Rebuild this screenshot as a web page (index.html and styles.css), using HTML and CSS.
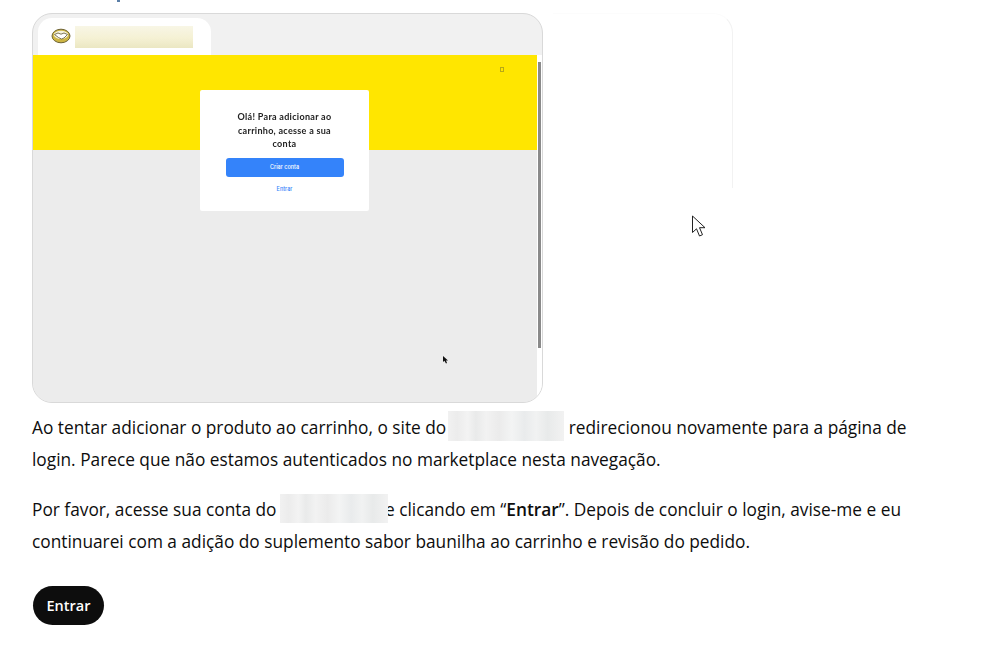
FILE: index.html
```html
<!DOCTYPE html>
<html lang="pt-BR">
<head>
<meta charset="utf-8">
<title>Entrar</title>
<link rel="stylesheet" href="styles.css">
</head>
<body>
<main class="page">
  <div class="top-strip"><span class="descender"></span></div>
  <div class="carousel">
    <figure class="shot">
      <div class="tabbar">
        <div class="tab">
          <svg class="logo" viewBox="0 0 20 16" width="20" height="16" aria-hidden="true">
            <ellipse cx="10" cy="8" rx="9" ry="6.800" fill="#cdb543" stroke="#6d6234" stroke-width="1"/>
            <ellipse cx="10" cy="6.800" rx="7.200" ry="4" fill="#f5f2df"/>
            <path d="M3.500 6.500l3.500-1.500 3 1.200 3-1.200 3.500 1.500-3.500 3.500-2.500 1-3-1.500z" fill="#fff" stroke="#6f6844" stroke-width=".9"/>
          </svg>
          <span class="tab-blur"></span>
        </div>
      </div>
      <div class="viewport">
        <div class="site">
          <div class="hero"><span class="hero-icon"></span></div>
          <div class="rest"></div>
          <div class="modal">
            <p class="modal-title">Olá! Para adicionar ao carrinho, acesse a sua conta</p>
            <div class="modal-btn">Criar conta</div>
            <div class="modal-link">Entrar</div>
          </div>
          <svg class="mini-cursor" viewBox="0 0 5 8" width="5" height="8" aria-hidden="true"><path d="M0 0v6l1.400-1.200L3 7.600 4 7 3 4.600h2z" fill="#111"/></svg>
        </div>
        <div class="scrollbar"><span class="thumb"></span></div>
      </div>
    </figure>
    <div class="ghost-card"></div>
  </div>
  <p class="para">Ao tentar adicionar o produto ao carrinho, o site do<span class="redact redact-a"></span> redirecionou novamente para a página de login. Parece que não estamos autenticados no marketplace nesta navegação.</p>
  <p class="para">Por favor, acesse sua conta do <span class="redact redact-b"></span>e clicando em “<strong>Entrar</strong>”. Depois de concluir o login, avise-me e eu continuarei com a adição do suplemento sabor baunilha ao carrinho e revisão do pedido.</p>
  <button class="enter" type="button">Entrar</button>
  <svg class="cursor" viewBox="0 0 16 24" width="16" height="24" aria-hidden="true"><path d="M1.500 1v16.500l4-3.700 3 7.200 3-1.300-3-7h5.500z" fill="#fff" stroke="#222" stroke-width="1"/></svg>
</main>
</body>
</html>
```
FILE: styles.css
```css
* { box-sizing: border-box; }
html, body { margin: 0; background: #fff; }
body { overflow: hidden; }
.page {
  position: relative;
  width: 984px;
  height: 659px;
  padding-left: 32px;
  overflow: hidden;
  font-family: "Open Sans", "Noto Sans", sans-serif;
  color: #0d0d0d;
}
.top-strip { position: relative; height: 13px; }
.descender {
  position: absolute;
  left: 85px;
  top: 0;
  width: 3px;
  height: 2px;
  background: #5b7fa8;
}
.carousel { position: relative; width: 702px; height: 390px; }
.shot {
  margin: 0;
  width: 511px;
  height: 390px;
  border: 1px solid #d9d9d9;
  border-radius: 20px;
  background: #f1f1f1;
  overflow: hidden;
  display: flex;
  flex-direction: column;
}
.tabbar { height: 41px; padding: 4px 0 0 5px; flex: none; }
.tab {
  width: 173px;
  height: 37px;
  background: #fff;
  border-radius: 14px 14px 0 0;
  display: flex;
  align-items: flex-start;
  padding: 9px 0 0 13px;
}
.logo { margin-top: 1px; flex: none; }
.tab-blur {
  width: 118px;
  height: 22px;
  margin: -1px 0 0 4px;
  background: linear-gradient(180deg, #f8f6e6 0%, #f5f1d4 55%, #ebe7c2 100%);
  filter: blur(.5px);
}
.viewport { flex: 1; display: flex; min-height: 0; }
.site { position: relative; width: 504px; flex: none; display: flex; flex-direction: column; }
.hero { position: relative; height: 95px; background: #ffe600; flex: none; }
.hero-icon {
  position: absolute;
  left: 467px;
  top: 12px;
  width: 4px;
  height: 5px;
  border: 1px solid #b8a916;
}
.rest { flex: 1; background: #ececec; }
.modal {
  position: absolute;
  left: 167px;
  top: 35px;
  width: 169px;
  height: 121px;
  background: #fff;
  border-radius: 2px;
  display: flex;
  flex-direction: column;
  align-items: center;
  padding-top: 20px;
}
.modal-title {
  margin: 0;
  width: 116px;
  font: 700 9px/13.500px Lato, Inter, "Liberation Sans", sans-serif;
  letter-spacing: .3px;
  color: #222;
  text-align: center;
  filter: blur(.35px);
}
.modal-btn {
  width: 118px;
  height: 19px;
  margin-top: 7px;
  border-radius: 3px;
  background: #3483fa;
  color: #fff;
  font: 500 5.500px/19px Inter, "Liberation Sans", sans-serif;
  text-align: center;
}
.modal-link {
  margin-top: 9px;
  color: #3483fa;
  font: 500 5.500px/7px Inter, "Liberation Sans", sans-serif;
}
.mini-cursor { position: absolute; left: 410px; top: 301px; }
.scrollbar { flex: 1; background: #fff; padding: 7px 1px 0; }
.thumb { display: block; height: 286px; width: 3px; margin: 0 auto; background: #8a8a8a; }
.ghost-card {
  position: absolute;
  left: 521px;
  top: 0;
  width: 180px;
  height: 175px;
  border-top: 1px solid #fcfcfc;
  border-right: 1px solid #f2f2f2;
  border-top-right-radius: 20px;
}
.para {
  margin: 9px 0 18px;
  width: 890px;
  font-size: 17.300px;
  line-height: 32px;
}
.para + .para { margin-top: 18px; margin-bottom: 28px; }
.para strong { font-weight: 600; }
.redact {
  position: relative;
  display: inline-block;
  vertical-align: top;
  background: linear-gradient(90deg, #f1f1f1 0%, #ececec 8%, #f3f3f3 17%, #e9eaea 24%, #f2f2f2 33%, #ebebeb 44%, #f3f4f4 55%, #e9ebec 66%, #f1f2f2 76%, #e8eaea 86%, #f2f2f2 100%);
  filter: blur(.4px);
}
.redact-a { width: 116px; height: 30px; margin: -1px 0 0 2px; }
.redact-b { width: 108px; height: 29px; margin: 0 -3px 0 -1px; }
.enter {
  display: block;
  width: 71px;
  height: 39px;
  margin-left: 1px;
  padding: 0;
  border: 0;
  border-radius: 20px;
  background: #0d0d0d;
  color: #fff;
  font: 600 14.500px/39px "Open Sans", "Noto Sans", sans-serif;
}
.cursor { position: absolute; left: 691px; top: 215px; }
```
